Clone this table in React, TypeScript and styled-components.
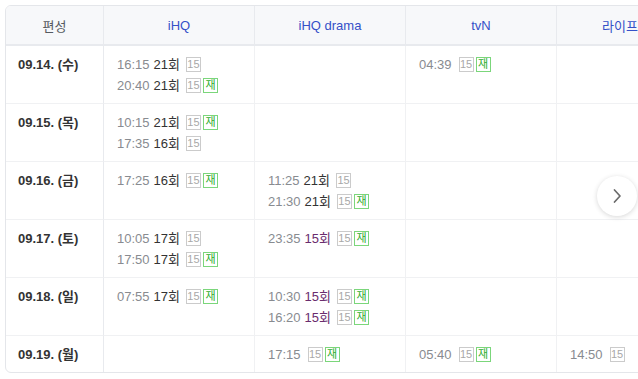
import React from 'react';
import styled, { createGlobalStyle } from 'styled-components';

const GlobalStyle = createGlobalStyle`
  html, body {
    margin: 0;
    padding: 0;
    background: #ffffff;
  }
  body {
    font-family: 'Liberation Sans', 'Noto Sans CJK KR', sans-serif;
  }
`;

const Page = styled.div`
  position: relative;
  width: 638px;
  height: 379px;
  overflow: hidden;
  padding: 5px 0 0 5px;
  box-sizing: border-box;
`;

const Frame = styled.div`
  width: 860px;
  border: 1px solid #e4e6ea;
  border-radius: 6px;
  overflow: hidden;
`;

const Table = styled.table`
  border-collapse: separate;
  border-spacing: 0;
  table-layout: fixed;
  width: 100%;
  font-size: 13px;
`;

const HeadCell = styled.th<{ first?: boolean }>`
  height: 38px;
  padding: 0;
  background: #f7f8fa;
  border-right: 1px solid #e8eaee;
  border-bottom: 2px solid #e8eaee;
  font-weight: normal;
  text-align: center;
  white-space: nowrap;
  color: ${({ first }) => (first ? '#555a60' : '#3550c8')};
`;

const DateCell = styled.td<{ last?: boolean }>`
  vertical-align: top;
  padding: 8px 12px 7px;
  line-height: 21px;
  font-weight: bold;
  color: #333;
  border-right: 1px solid #e8eaee;
  border-bottom: ${({ last }) => (last ? 'none' : '1px solid #f0f1f3')};
`;

const SlotCell = styled.td<{ last?: boolean }>`
  vertical-align: top;
  padding: 8px 12px 7px 13px;
  line-height: 21px;
  border-right: 1px solid #f0f1f3;
  border-bottom: ${({ last }) => (last ? 'none' : '1px solid #f0f1f3')};
  white-space: nowrap;
`;

const Slot = styled.div`
  display: flex;
  align-items: center;
  height: 21px;
`;

const Time = styled.span`
  color: #888b90;
`;

const Episode = styled.span<{ visited?: boolean }>`
  margin-left: 4px;
  color: ${({ visited }) => (visited ? '#6a2c6e' : '#333')};
`;

const Badges = styled.span<{ wide?: boolean }>`
  display: inline-flex;
  gap: 2px;
  margin-left: ${({ wide }) => (wide ? '7px' : '6px')};
`;

const Badge = styled.span<{ tone: 'age' | 're' }>`
  display: inline-flex;
  align-items: center;
  justify-content: center;
  box-sizing: border-box;
  width: 15px;
  height: 15px;
  font-size: 11px;
  line-height: 1;
  border: 1px solid ${({ tone }) => (tone === 're' ? '#7bd67b' : '#cbcbcb')};
  color: ${({ tone }) => (tone === 're' ? '#2fae2f' : '#a8a8a8')};
`;

const NextButton = styled.button`
  position: absolute;
  left: 597px;
  top: 176px;
  width: 40px;
  height: 40px;
  border-radius: 50%;
  border: none;
  padding: 0;
  background: #ffffff;
  box-shadow: 0 1px 5px rgba(0, 0, 0, 0.16);
  display: flex;
  align-items: center;
  justify-content: center;
`;

type Item = { time: string; ep?: string; visited?: boolean; re?: boolean };

const channels = ['iHQ', 'iHQ drama', 'tvN', '라이프타임'];

const rows: { date: string; cells: Item[][] }[] = [
  {
    date: '09.14. (수)',
    cells: [
      [
        { time: '16:15', ep: '21회' },
        { time: '20:40', ep: '21회', re: true },
      ],
      [],
      [{ time: '04:39', re: true }],
      [],
    ],
  },
  {
    date: '09.15. (목)',
    cells: [
      [
        { time: '10:15', ep: '21회', re: true },
        { time: '17:35', ep: '16회' },
      ],
      [],
      [],
      [],
    ],
  },
  {
    date: '09.16. (금)',
    cells: [
      [{ time: '17:25', ep: '16회', re: true }],
      [
        { time: '11:25', ep: '21회' },
        { time: '21:30', ep: '21회', re: true },
      ],
      [],
      [],
    ],
  },
  {
    date: '09.17. (토)',
    cells: [
      [
        { time: '10:05', ep: '17회' },
        { time: '17:50', ep: '17회', re: true },
      ],
      [{ time: '23:35', ep: '15회', visited: true, re: true }],
      [],
      [],
    ],
  },
  {
    date: '09.18. (일)',
    cells: [
      [{ time: '07:55', ep: '17회', re: true }],
      [
        { time: '10:30', ep: '15회', visited: true, re: true },
        { time: '16:20', ep: '15회', visited: true, re: true },
      ],
      [],
      [],
    ],
  },
  {
    date: '09.19. (월)',
    cells: [[], [{ time: '17:15', re: true }], [{ time: '05:40', re: true }], [{ time: '14:50' }]],
  },
];

const ScheduleItem = ({ item }: { item: Item }) => (
  <Slot>
    <Time>{item.time}</Time>
    {item.ep && <Episode visited={item.visited}>{item.ep}</Episode>}
    <Badges wide={!item.ep}>
      <Badge tone="age">15</Badge>
      {item.re && <Badge tone="re">재</Badge>}
    </Badges>
  </Slot>
);

export default function App() {
  return (
    <>
      <GlobalStyle />
      <Page>
        <Frame>
          <Table>
            <colgroup>
              <col style={{ width: 98 }} />
              {channels.map((c) => (
                <col key={c} style={{ width: 151 }} />
              ))}
              <col />
            </colgroup>
            <thead>
              <tr>
                <HeadCell first>편성</HeadCell>
                {channels.map((c) => (
                  <HeadCell key={c}>{c}</HeadCell>
                ))}
                <HeadCell />
              </tr>
            </thead>
            <tbody>
              {rows.map((row, i) => {
                const last = i === rows.length - 1;
                return (
                  <tr key={row.date}>
                    <DateCell last={last}>{row.date}</DateCell>
                    {row.cells.map((items, j) => (
                      <SlotCell key={j} last={last}>
                        {items.map((it) => (
                          <ScheduleItem key={it.time} item={it} />
                        ))}
                      </SlotCell>
                    ))}
                    <SlotCell last={last} />
                  </tr>
                );
              })}
            </tbody>
          </Table>
        </Frame>
        <NextButton aria-label="다음">
          <svg width="16" height="16" viewBox="0 0 16 16" fill="none">
            <path d="M5.5 2 L11 8 L5.5 14" stroke="#6b6b6b" strokeWidth="1.7" strokeLinecap="round" strokeLinejoin="round" />
          </svg>
        </NextButton>
      </Page>
    </>
  );
}
